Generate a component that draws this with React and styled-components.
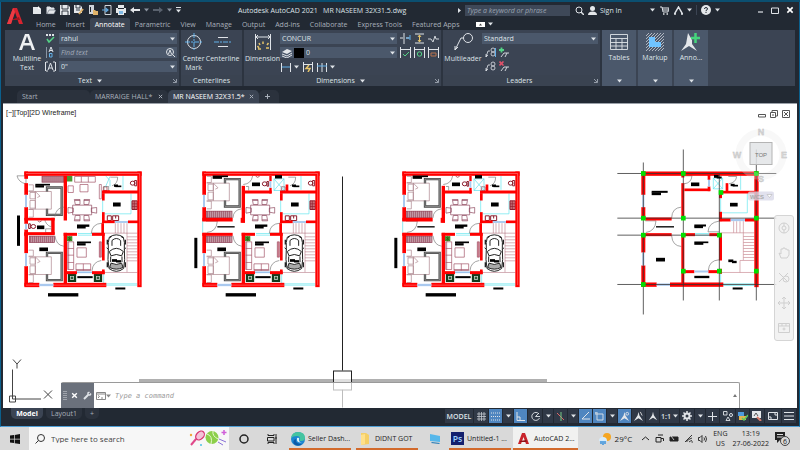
import React, {useState} from 'react';
import styled, {createGlobalStyle} from 'styled-components';

const GlobalStyle = createGlobalStyle`
  * { box-sizing: border-box; }
  body {
    margin: 0;
    font-family: "Open Sans", "Noto Sans", sans-serif;
    font-size: 7px;
    line-height: 9px;
    color: #dfe3e8;
  }
  button, input, select {
    font: inherit;
    color: inherit;
    border: 0;
    padding: 0;
    margin: 0;
    background: none;
  }
  svg { display: block; flex: none; }
`;

const Screen = styled.div`
  display: flex;
  flex-direction: column;
  height: 100vh;
  background: #0b4f70;
`;

const AppWindow = styled.div`
  flex: 1;
  min-height: 0;
  display: flex;
  flex-direction: column;
  margin-top: 2px;
  padding: 0 3px;
  background: #222933;
  border-left: 1px solid #0b5f8c;
  border-right: 1px solid #0b5f8c;
  border-bottom: 1px solid #4f9fd6;
`;

const Header = styled.header`
  display: flex;
  height: 28px;
`;

const LogoButton = styled.button`
  width: 26px;
  padding-left: 3px;
`;

const HeaderRows = styled.div`
  flex: 1;
  min-width: 0;
`;

const TitleRow = styled.div`
  display: flex;
  align-items: center;
  height: 16px;
`;

const QuickAccess = styled.div`
  display: flex;
  align-items: center;
  gap: 4px;
  width: 208px;
  padding-left: 2px;
`;

const ToolButton = styled.button`
  display: flex;
  align-items: center;
  justify-content: center;
  width: ${props => props.$w || 10}px;
  height: ${props => props.$h || 11}px;
`;

const Title = styled.h1`
  flex: 1;
  margin: 0;
  font-size: 7px;
  font-weight: 400;
  white-space: pre;
`;

const SearchBox = styled.input`
  width: 105px;
  height: 11px;
  padding: 0 2px;
  margin: 0 4px;
  background: #3e4858;
  font-style: italic;
  outline: none;
  &::placeholder { color: #9aa3b0; }
`;

const SignIn = styled.button`
  display: flex;
  align-items: center;
  gap: 3px;
  width: 62px;
  margin-left: 4px;
`;

const Group = styled.div`
  display: flex;
  align-items: center;
  gap: ${props => props.$gap}px;
  padding: 0 3px 0 ${props => props.$left || 0}px;
`;

const Divider = styled.span`
  width: 1px;
  height: 10px;
  background: #3b4453;
`;

const Menu = styled.nav`
  display: flex;
  align-items: center;
  height: 12px;
  padding-left: 1px;
`;

const MenuTab = styled.button`
  height: 12px;
  padding: 0 5px;
  border-radius: 2px 2px 0 0;
  white-space: nowrap;
  color: ${props => (props.$active ? '#fff' : '#a9b0ba')};
  background: ${props => (props.$active ? '#3b4453' : 'none')};
`;

const Ribbon = styled.section`
  display: flex;
  height: 56px;
  margin: 0 1px;
  background: #3b4453;
`;

const Panel = styled.div`
  display: flex;
  flex-direction: column;
  width: ${props => props.$w}px;
  border-right: 2px solid #2c3440;
`;

const PanelBody = styled.div`
  flex: 1;
  display: flex;
  padding: 3px 2px 0 ${props => props.$pad || 4}px;
`;

const PanelFoot = styled.div`
  display: flex;
  align-items: center;
  height: 11px;
  padding: 0 2px;
  background: #3a4351;
`;

const PanelName = styled.button`
  flex: 1;
  display: flex;
  align-items: center;
  justify-content: center;
  gap: 5px;
`;

const BigTool = styled.button`
  display: flex;
  flex-direction: column;
  align-items: center;
  width: ${props => props.$w}px;
  gap: 3px;
`;

const Rows = styled.div`
  flex: 1;
  display: flex;
  flex-direction: column;
  gap: 3px;
`;

const Row = styled.div`
  display: flex;
  align-items: center;
  gap: 3px;
  height: 11px;
`;

const FieldBox = styled.label`
  flex: 1;
  display: flex;
  align-items: center;
  gap: 2px;
  min-width: 0;
  height: 11px;
  padding: 0 2px;
  background: #4b586b;
  select, input {
    flex: 1;
    min-width: 0;
    height: 11px;
    appearance: none;
    outline: none;
  }
  input::placeholder { color: #a4adba; font-style: italic; }
`;

const ToolGrid = styled.div`
  display: grid;
  grid-template-columns: repeat(${props => props.$cols}, 11px);
  grid-auto-rows: 11px;
  gap: 3px;
  width: ${props => props.$w}px;
  padding-left: 3px;
`;

const Collapsed = styled.button`
  display: flex;
  flex-direction: column;
  align-items: center;
  gap: 2px;
  width: 34px;
  padding: 3px 0;
  margin-right: 2px;
  background: #4b586b;
  svg:last-child { margin-top: auto; }
`;

const FileTabs = styled.nav`
  display: flex;
  align-items: flex-end;
  height: 17px;
  padding-left: 13px;
`;

const FileTab = styled.div`
  display: flex;
  align-items: center;
  justify-content: space-between;
  width: ${props => props.$w}px;
  height: 13px;
  padding: 0 5px;
  border-radius: 5px 5px 0 0;
  color: ${props => (props.$active ? '#fff' : '#a9b0ba')};
  background: ${props => (props.$active ? '#3b4453' : '#2b323d')};
  button { white-space: nowrap; }
`;

const Canvas = styled.main`
  position: relative;
  flex: 1;
  min-height: 0;
  margin: 0 -1px;
  background: #fff;
  border-top: 1px solid #9aa0a8;
  overflow: hidden;
`;

const Drawing = styled.svg`
  width: 100%;
  height: 100%;
`;

const ViewLabel = styled.div`
  position: absolute;
  top: 4px;
  left: 3px;
  font-family: "Liberation Sans", sans-serif;
  color: #222;
`;

const ViewButtons = styled.div`
  position: absolute;
  top: 4px;
  right: 6px;
  display: flex;
  gap: 2px;
`;

const NavBar = styled.div`
  position: absolute;
  top: 111px;
  right: 3px;
  display: flex;
  flex-direction: column;
  align-items: center;
  justify-content: space-around;
  width: 20px;
  height: 126px;
  border: 1px solid #d5d5d5;
  border-radius: 3px;
  background: rgba(240, 240, 240, 0.85);
`;

const CommandLine = styled.div`
  position: absolute;
  left: 58px;
  right: 57px;
  bottom: 0;
  display: flex;
  align-items: center;
  height: 26px;
  padding-right: 2px;
  border: 1px solid #9a9a9a;
  border-width: 1px 1px 0 0;
  border-radius: 2px 2px 0 0;
  background: rgba(255, 255, 255, 0.7);
  input {
    flex: 1;
    height: 20px;
    padding-left: 4px;
    font: italic 7px "DejaVu Sans Mono", monospace;
    outline: none;
    color: #333;
  }
  input::placeholder { color: #999; opacity: 1; }
`;

const CommandGrip = styled.div`
  display: flex;
  align-items: center;
  justify-content: space-around;
  width: 33px;
  height: 25px;
  margin-right: 2px;
  background: #6b717c;
`;

const StatusBar = styled.footer`
  display: flex;
  align-items: flex-start;
  justify-content: space-between;
  height: 18px;
  padding-left: 7px;
`;

const LayoutTabs = styled.div`
  display: flex;
  gap: 3px;
`;

const LayoutTab = styled.button`
  height: 11px;
  min-width: ${props => props.$w}px;
  padding: 0 5px;
  border-radius: 0 0 5px 5px;
  font-weight: ${props => (props.$active ? 700 : 400)};
  color: ${props => (props.$active ? '#fff' : '#a9b0ba')};
  background: ${props => (props.$active ? '#3b4453' : '#2b323d')};
`;

const StatusTools = styled.div`
  display: flex;
  gap: 1px;
  padding-top: 1px;
`;

const StatusTool = styled.button`
  display: flex;
  align-items: center;
  justify-content: center;
  gap: 2px;
  width: ${props => props.$w || 13}px;
  height: 14px;
  font-weight: 600;
  background: ${props => (props.$on ? '#4f86c0' : '#303947')};
`;

const Taskbar = styled.footer`
  display: flex;
  align-items: stretch;
  height: 23px;
  color: #222;
  background: #d9d9d9;
`;

const TaskButton = styled.button`
  display: flex;
  align-items: center;
  justify-content: ${props => (props.$open ? 'flex-start' : 'center')};
  gap: 3px;
  width: ${props => props.$w}px;
  padding: ${props => (props.$open ? '2px 2px 0' : '0')};
  margin-right: ${props => props.$mr || 0}px;
  white-space: nowrap;
  background: ${props => (props.$front ? '#f1f1f0' : 'none')};
  border-bottom: ${props => (props.$open ? '2px solid #d26a2c' : '0')};
`;

const TaskSearch = styled.label`
  display: flex;
  align-items: center;
  gap: 6px;
  width: 200px;
  padding: 0 2px 0 6px;
  background: #f7f7f7;
  input {
    flex: 1;
    min-width: 0;
    font-size: 8px;
    outline: none;
  }
  input::placeholder { color: #444; opacity: 1; }
`;

const Tray = styled.div`
  flex: 1;
  display: flex;
  align-items: center;
  justify-content: flex-end;
  gap: 5px;
  padding-right: 10px;
`;

const Weather = styled.button`
  display: flex;
  align-items: center;
  gap: 4px;
  font-size: 8px;
  margin-right: 4px;
`;

const TrayText = styled.div`
  text-align: center;
  line-height: 10px;
`;

const Icon = ({w = 10, h, box, children, color = '#dfe3e8', fill = 'none', sw = 1}) => (
  <svg width={w} height={h || w} viewBox={box || `0 0 ${w} ${h || w}`} fill={fill}
    stroke={color} strokeWidth={sw} aria-hidden="true">
    {children}
  </svg>
);

const Caret = ({color = '#dfe3e8'}) => (
  <svg width="5" height="4" viewBox="0 0 5 4" aria-hidden="true">
    <path d="M0 0.5H5L2.5 3.5Z" fill={color}/>
  </svg>
);

const Corner = () => (
  <Icon w={4} sw={0.8} color="#aab2be"><path d="M0 0L3 3M3.5 0V3.5H0"/></Icon>
);

const Cross = ({color = '#a9b0ba', w = 5}) => (
  <Icon w={w} box="0 0 6 6" color={color} sw={1.2}><path d="M1 1L5 5M5 1L1 5"/></Icon>
);

const quickTools = [
  ['New', <Icon color="none"><path d="M1 2H6L9 4V9H1Z" fill="#e4e7ea"/><path d="M6 1L9 4H6Z" fill="#fff"/></Icon>],
  ['Open', <Icon><path d="M1 9V2H4L5 3H8V5" fill="#e4e7ea"/><path d="M1 9L3 5H10L8 9Z" fill="#e4e7ea" stroke="#4a5361" strokeWidth="0.5"/></Icon>],
  ['Save', <Icon><path d="M0 0H8L10 2V10H0Z" fill="#e4e7ea" stroke="none"/><path d="M2 0V4H8V0M2 10V6H8V10" stroke="#222933" strokeWidth="0.9"/></Icon>],
  ['Save As', <Icon><path d="M0 0H6L8 2V8H0Z" fill="#e4e7ea" stroke="none"/><path d="M2 0V3H6V0M2 5H6" stroke="#222933" strokeWidth="0.9"/><path d="M5 9L9 4" stroke="#e0b36a" strokeWidth="2"/></Icon>],
  ['Open from Web', <Icon><path d="M1 0H6V9H1Z" fill="#cfd4da" stroke="none"/><path d="M5 5H7L8 6H10V10H5Z" fill="#e0b36a" stroke="none"/><path d="M2.5 2V7" stroke="#222933"/></Icon>],
  ['Save to Web', <Icon><path d="M3 0.5H9V9.5H3Z" stroke="#cfd4da"/><path d="M0 5H5M3.5 3L6 5L3.5 7" stroke="#5fa8e0" strokeWidth="1.2"/></Icon>],
  ['Plot', <Icon><path d="M2 0H8V3H10V8H8V10H2V8H0V3H2Z" fill="#e4e7ea" stroke="none"/><path d="M2 3.5H8" stroke="#222933"/><path d="M3 6H7V9H3Z" fill="#7fb9e6" stroke="none"/></Icon>],
  ['Undo', <Icon><path d="M0 5L4 2V4H10V6H4V8Z" fill="#e4e7ea" stroke="none"/></Icon>],
];

const menuTabs = ['Home', 'Insert', 'Annotate', 'Parametric', 'View', 'Manage', 'Output',
  'Add-ins', 'Collaborate', 'Express Tools', 'Featured Apps'];

const dimensionTools = [
  ['Break', <Icon w={11}><path d="M4 0V11M0 5H3M6 5H9"/><path d="M6 5H10M10 2V7" stroke="#63b0ea"/></Icon>],
  ['Adjust Space', <Icon w={11}><path d="M1 1H10M1 10H10"/><path d="M5.5 2V9M4 4L5.5 2L7 4M4 7L5.5 9L7 7" stroke="#e6c46a"/></Icon>],
  ['Jogged', <Icon w={11}><path d="M0 6H3L5 9L7 3L8 6H11" strokeWidth="0.9"/></Icon>],
  ['Inspect', <Icon w={11}><path d="M0.5 0V11M10.5 0V11M1 2.5H10"/><path d="M3 7L5 9L9 5" stroke="#54d487"/></Icon>],
  ['Update', <Icon w={11}><path d="M0.5 0V11M10.5 0V11M1 2.5H10"/><circle cx="5.5" cy="7" r="2.2" stroke="#54d487"/></Icon>],
  ['Reassociate', <Icon w={11}><path d="M0.5 0V11M10.5 0V11M1 2.5H10"/><path d="M3 6H8V9H3Z" stroke="#b9734f"/></Icon>],
];

const leaderShape = <path d="M1 10L3 4H5M1 10V7M1 10L3 8M8 5A2 2 0 1 0 8 1A2 2 0 1 0 8 5A2 2 0 1 0 8 9A2 2 0 1 0 8 5" strokeWidth="0.8"/>;
const leaderTools = [
  ['Align', <Icon w={11}>{leaderShape}<path d="M10.5 1V10" stroke="#63b0ea"/></Icon>],
  ['Add Leader', <Icon w={11}><path d="M0 3H5M2.5 0.5V5.5" stroke="#54d487" strokeWidth="1.8"/><path d="M2 10L5 6H10M6 10L8 6" strokeWidth="0.9"/></Icon>],
  ['Collect', <Icon w={11}>{leaderShape}</Icon>],
  ['Remove Leader', <Icon w={11}><path d="M0.5 0.5L4.5 4.5M4.5 0.5L0.5 4.5" stroke="#e0526a" strokeWidth="1.6"/><path d="M2 10L5 6H10M6 10L8 6" strokeWidth="0.9"/></Icon>],
];

const personShape = <path d="M6 1L7 5L11 11L6 8L1 11L5 5Z" fill="#e4e7ea" stroke="none"/>;

// x, y, w, h of solid blocks, three drawing units to the pixel
const Blocks = ({list, fill}) => (
  <g fill={fill} stroke="none">
    {list.map(([x, y, w, h], i) => <rect key={i} x={x} y={y} width={w} height={h}/>)}
  </g>
);

const Hatch = ({x, y, w, h}) => (
  <g stroke="#8a3a50" strokeWidth="2">
    <rect x={x} y={y} width={w} height={h} fill="#c9a3ad"/>
    {Array.from({length: Math.floor(w / 6)}, (_, i) => (
      <path key={i} d={`M${x + 3 + i * 6} ${y}v${h}`}/>
    ))}
  </g>
);

const Bed = ({y}) => (
  <g transform={`translate(0 ${y})`} fill="none" stroke="#a98089" strokeWidth="2">
    <path d="M50 0H64V18H50M50 74H64V97H50M50 20H118V73H50M70 20V73"/>
    <path d="M54 23H70V42H54ZM54 47H70V70H54ZM70 20L84 34L76 38"/>
    <path d="M105 20V8H149V90H105V72" stroke="#4a4a4a" strokeWidth="7"/>
    <path d="M105 20V8H149V90H105V72" stroke="#a5a5a5" strokeWidth="2"/>
  </g>
);

const Car = () => (
  <g fill="none" stroke="#222" strokeWidth="3">
    <path d="M292 230Q313 216 334 230Q339 245 337 265Q340 300 335 324Q313 341 291 324Q286 300 289 265Q287 245 292 230Z"/>
    <path d="M293 232L299 228M333 232L327 228M292 273Q313 254 334 273L329 286Q313 278 297 286Z"/>
    <path d="M297 308Q313 316 329 308L333 321Q313 331 293 321Z" fill="#aaa"/>
    <path d="M296 288V305M330 288V305M300 240Q313 228 326 240V256M300 240V256M284 262L290 267M342 262L336 267"/>
    <path d="M286 238V252M340 238V252M286 305V320M340 305V320" strokeWidth="4"/>
  </g>
);

const Dining = () => (
  <g fill="none" stroke="#8a4056" strokeWidth="2">
    <path d="M182 134H239V163H182Z"/>
    <path d="M187 117H204V132H190ZM216 117H233L230 132H216ZM190 165H204V181H187ZM216 165H230L233 181H216ZM168 141L184 143V155L168 158ZM254 141L238 143V155L254 158Z"/>
    <path d="M189 120H204M216 120H231M189 178H204M216 178H231"/>
  </g>
);

const EastSide = () => (
  <g>
    <g fill="none" stroke="#a8606f" strokeWidth="1.5">
      <path d="M310 188V218M318 188V218M327 188V218M336 188V218M345 188V335M278 218H376M275 336H376"/>
      <path d="M345 229H376M345 238H376M345 247H376M345 256H376M345 265H376M345 274H376M345 283H376M345 292H376M345 301H376"/>
    </g>
    <g fill="none" stroke="#5fe6ee" strokeWidth="2">
      <path d="M333 46V88M357 99V160H278M272 118V158M275 335V370H376M275 374H376M198 219H240M198 224H240"/>
    </g>
    <g fill="none" stroke="#777" strokeWidth="2">
      <path d="M295 50H317Q317 70 300 76M270 188Q240 190 238 218H270M268 300Q242 304 240 331"/>
    </g>
    <g fill="none" stroke="#8c1c2c" strokeWidth="3">
      <path d="M374 60H368V76H374Z"/>
      <ellipse cx="362" cy="68" rx="7" ry="6"/>
      <path d="M274 79H285V90H274Z" strokeWidth="2"/>
      <path d="M286 166H298V180H286ZM302 166H320V180H302ZM311 166V174"/>
      <path d="M360 121H376V147H360Z" fill="#c87078"/>
      <path d="M360 130H376M360 138H376M367 121V147" strokeWidth="2"/>
    </g>
    <Dining/>
    <g fill="none" stroke="#a04e62" strokeWidth="2">
      <path d="M167 244H185V327H167ZM167 264H185M167 284H185M167 306H185M170 244V327"/>
      <path d="M192 310H236V330H192ZM214 310V330M192 327H236M195 262H223V290H195Z"/>
      <path d="M262 244H268V290H262Z" fill="#d08090"/>
    </g>
    <Blocks fill="#4a9632" list={[[165, 227, 16, 15]]}/>
    <path d="M167 229L179 240M179 229L167 240M173 227V242" stroke="#235c14" strokeWidth="2"/>
    <Car/>
    <Blocks fill="#9cc3ec" list={[[308, 182, 40, 5], [195, 333, 45, 5]]}/>
    <g fill="#fff" stroke="#123c1c" strokeWidth="7">
      <path d="M171 343H189V361H171ZM249 343H267V361H249Z"/>
    </g>
    <Blocks fill="#2f5a3a" list={[[176, 348, 8, 8], [254, 348, 8, 8]]}/>
  </g>
);

const commonWalls = [
  [37, 33, 352, 13], [376, 33, 13, 347], [37, 367, 45, 13], [124, 367, 159, 13],
  [37, 217, 11, 61], [37, 317, 11, 60], [155, 217, 10, 153], [268, 188, 8, 30],
  [270, 98, 8, 22], [270, 155, 8, 32], [270, 180, 38, 8], [348, 180, 30, 8],
  [270, 90, 108, 9], [155, 217, 40, 9], [240, 217, 38, 9], [270, 217, 8, 83],
  [270, 327, 8, 14], [165, 332, 30, 9], [240, 332, 38, 9],
];

const commonNotes = [
  [306, 72, 12, 7], [310, 75, 18, 5], [303, 126, 23, 12], [195, 192, 37, 7], [195, 196, 26, 8],
  [195, 243, 42, 5], [195, 248, 26, 7], [82, 261, 26, 11], [300, 296, 15, 8], [312, 299, 15, 7],
  [196, 347, 46, 6], [310, 381, 30, 6],
];

const WallLines = () => (
  <path d="M383 39V374M42 39H383M42 374H82M124 374H283" fill="none" stroke="#ff9a9a" strokeWidth="1.5"/>
);

const PlanB = ({x}) => (
  <g transform={`translate(${x} 160) scale(0.3333)`}>
    <EastSide/>
    <Bed y={48}/>
    <Bed y={269}/>
    <Hatch x={50} y={152} w={76} h={20}/>
    <Hatch x={50} y={227} w={76} h={19}/>
    <g fill="none" stroke="#777" strokeWidth="2">
      <path d="M48 182H82Q80 214 50 216M129 172Q130 148 155 145M155 257Q132 254 129 226M160 72Q184 70 188 46M168 78H176V90"/>
    </g>
    <path d="M252 55H282V90H252ZM252 55L282 90M282 55L252 90M38 180V217M257 46V52" fill="none" stroke="#5cdde8" strokeWidth="2"/>
    <g fill="none" stroke="#8c1c2c" strokeWidth="3">
      <path d="M236 63H231V77H236Z"/><ellipse cx="224" cy="70" rx="7" ry="6"/>
      <path d="M197 47Q203 54 209 47" strokeWidth="2"/>
    </g>
    <Blocks fill="#ff0000" list={[...commonWalls, [37, 33, 11, 70], [37, 140, 11, 41], [37, 172, 91, 11],
      [152, 172, 13, 15], [155, 76, 10, 110], [37, 217, 91, 9], [163, 90, 82, 9], [238, 46, 7, 16],
      [238, 82, 7, 17], [287, 72, 8, 20]]}/>
    <WallLines/>
    <Blocks fill="#a9c9ef" list={[[39, 103, 6, 37], [39, 278, 6, 39], [82, 370, 42, 7], [239, 62, 5, 20]]}/>
    <Blocks fill="#000" list={[...commonNotes, [68, 45, 46, 5], [68, 49, 28, 6], [186, 66, 24, 11],
      [255, 44, 21, 10], [82, 197, 52, 4], [13, 232, 9, 91], [107, 398, 91, 10]]}/>
  </g>
);

const PlanA = () => (
  <g transform="translate(12 160) scale(0.3333)">
    <EastSide/>
    <Bed y={73}/>
    <Bed y={269}/>
    <Hatch x={90} y={47} w={66} h={18}/>
    <Hatch x={52} y={227} w={76} h={19}/>
    <g fill="none" stroke="#777" strokeWidth="2">
      <path d="M15 46H42V70Q20 66 15 46M155 140Q132 142 129 168M155 257Q132 254 129 226M98 175Q100 192 118 200V178"/>
      <path d="M101 205H119V217H101ZM276 78H290V92H276Z"/>
    </g>
    <g fill="none" stroke="#a04e62" strokeWidth="2">
      <path d="M188 48H250V65H188ZM208 48V65M229 48V65M168 76H184V96H168ZM204 72H228V94H204ZM262 72H268V115H262Z"/>
    </g>
    <Blocks fill="#4a9632" list={[[165, 46, 16, 17]]}/>
    <path d="M281 46L294 60V78M281 78L294 48" fill="none" stroke="#5cdde8" strokeWidth="2"/>
    <g fill="none" stroke="#8c1c2c" strokeWidth="3">
      <path d="M50 190H55V204H50Z"/><ellipse cx="64" cy="198" rx="7" ry="6"/>
      <path d="M77 181Q83 188 89 181" strokeWidth="2"/>
    </g>
    <Blocks fill="#ff0000" list={[...commonWalls, [37, 33, 11, 22], [37, 68, 11, 35], [37, 140, 11, 50],
      [37, 207, 11, 20], [37, 172, 91, 8], [118, 172, 10, 50], [155, 46, 10, 134], [37, 215, 91, 9],
      [272, 90, 22, 4]]}/>
    <WallLines/>
    <Blocks fill="#a9c9ef" list={[[39, 103, 6, 37], [39, 190, 6, 17], [39, 278, 6, 39], [82, 370, 42, 7]]}/>
    <Blocks fill="#000" list={[...commonNotes, [70, 70, 44, 5], [70, 74, 26, 7], [75, 195, 22, 11],
      [15, 165, 9, 91], [108, 398, 91, 10]]}/>
  </g>
);

const nodes = [[100, 219], [220, 219], [439, 219], [333, 276], [220, 353], [439, 353], [100, 353],
  [100, 404], [220, 404], [328, 404], [220, 512], [328, 512], [439, 512], [100, 552]];

const ColumnPlan = () => (
  <g transform="translate(610 100) scale(0.3333)">
    <g fill="none" stroke="#c98a92" strokeWidth="2">
      <path d="M371 362V397M380 362V397M390 362V397M400 362V480M332 397H433M332 516H433M390 516V480H400"/>
      <path d="M400 408H433M400 417H433M400 426H433M400 435H433M400 444H433M400 453H433M400 462H433M400 471H433M400 480H433"/>
    </g>
    <g fill="none" stroke="#5fe6ee" strokeWidth="2">
      <path d="M310 233H338V265H310ZM310 233L338 265M338 233L310 265M392 225V268M412 279V337H332V292M332 516V550H433M255 399H298M255 404H298M340 555H433"/>
    </g>
    <g fill="none" stroke="#777" strokeWidth="2">
      <path d="M222 226H246Q244 248 222 250M355 228H380Q378 246 357 250M214 320Q186 322 185 352M106 361H138Q136 392 108 396M214 438Q187 436 185 406M327 362Q296 366 294 394H327M327 478Q297 480 295 510"/>
    </g>
    <Blocks fill="#ff0000" list={[
      [95, 213, 345, 13], [94, 213, 12, 70], [94, 320, 12, 35], [94, 402, 12, 54], [94, 495, 12, 64],
      [433, 213, 13, 347], [95, 546, 45, 13], [180, 546, 160, 13], [214, 213, 9, 18], [214, 248, 9, 106],
      [214, 402, 9, 148], [106, 351, 79, 9], [95, 398, 90, 9], [220, 398, 35, 9], [298, 398, 34, 9],
      [223, 264, 78, 8], [293, 223, 8, 15], [293, 258, 8, 14], [347, 248, 8, 28], [335, 271, 105, 8],
      [327, 271, 9, 22], [327, 334, 9, 28], [327, 398, 9, 82], [327, 505, 9, 15], [328, 354, 34, 9],
      [405, 354, 30, 9], [218, 509, 35, 9], [295, 509, 34, 9],
    ]}/>
    <Blocks fill="#a9c9ef" list={[[97, 283, 6, 37], [97, 456, 6, 39], [140, 549, 40, 7], [294, 238, 6, 20],
      [362, 355, 43, 7], [253, 510, 42, 6]]}/>
    <path d="M100 186V642M220 147V600M328 404V600M439 147V600M328 219V404M22 219H499M22 353H499M22 404H330M22 552H499"
      stroke="#333" strokeOpacity="0.9" strokeWidth="2.6"/>
    <g fill="#00e000">
      {nodes.map(([x, y]) => <rect key={`${x}-${y}`} x={x - 7} y={y - 7} width="14" height="14"/>)}
    </g>
    <Blocks fill="#000" list={[[125, 271, 48, 6], [125, 276, 28, 8], [243, 246, 25, 11], [312, 223, 14, 9],
      [320, 228, 15, 6], [362, 250, 12, 7], [368, 253, 16, 5], [360, 307, 23, 11], [253, 372, 35, 6],
      [253, 376, 26, 7], [253, 423, 42, 5], [253, 427, 27, 6], [138, 377, 54, 4], [138, 472, 27, 11],
      [355, 477, 15, 8], [366, 481, 14, 7], [253, 526, 45, 7], [368, 561, 30, 6]]}/>
  </g>
);

const ViewCube = () => (
  <g fontFamily="Liberation Sans, sans-serif" fontWeight="700" textAnchor="middle">
    <circle cx="761" cy="154" r="22" fill="none" stroke="#e8e8e8" strokeOpacity="0.3" strokeWidth="7"/>
    <rect x="750" y="142" width="22" height="22" fill="#e2e4e6" fillOpacity="0.85" stroke="#b4b4b4"/>
    <g fontSize="9" fill="#dadada" stroke="#b8b8b8" strokeWidth="0.3">
      <text x="761" y="134">N</text>
      <text x="737" y="157">W</text>
      <text x="784" y="157">E</text>
      <text x="761" y="181">S</text>
    </g>
    <text x="761" y="156" fontSize="6" fontWeight="400" fill="#777">TOP</text>
    <rect x="748" y="191" width="26" height="9" rx="2" fill="#d9d9e8" fillOpacity="0.8"/>
    <text x="757" y="198" fontSize="6" fill="#aaa">WCS</text>
    <path d="M767 194H772L769.5 197Z" fill="#fff" stroke="#aaa" strokeWidth="0.5"/>
  </g>
);

const Crosshair = () => (
  <g fill="none" stroke="#222">
    <path d="M139 380H547" stroke="#b0b0b0" strokeWidth="3"/>
    <path d="M342.5 176V370M342.5 389V407"/>
    <rect x="333.5" y="370.5" width="18" height="19" fill="#fff" fillOpacity="0.6"/>
  </g>
);

const UcsMark = () => (
  <g fill="none" stroke="#444">
    <path d="M12.5 369V398.5H41M9.5 395.5H15.5V401.5H9.5Z"/>
    <path d="M13 359L17 363.5L21 359M17 363.5V368M44 390L52 398M52 390L44 398"/>
  </g>
);

const Field = ({label, options}) => (
  <FieldBox>
    <select aria-label={label}>
      {options.map(option => <option key={option}>{option}</option>)}
    </select>
    <Caret/>
  </FieldBox>
);

const navTools = [
  ['Full navigation wheel', <Icon w={12} color="#cfcfcf"><circle cx="6" cy="6" r="5"/><circle cx="6" cy="6" r="2"/><path d="M6 1V4M6 8V11"/></Icon>],
  ['Pan', <Icon w={12} color="#cfcfcf"><path d="M3 11L1 6L3 7V2H5V1H7V2H9V3H11V8L9 11Z"/></Icon>],
  ['Zoom', <Icon w={12} color="#cfcfcf"><path d="M1 1L10 10M10 1L1 10"/><circle cx="8" cy="7" r="3"/></Icon>],
  ['Orbit', <Icon w={12} color="#cfcfcf"><path d="M6 0V12M0 6H12M4 2L6 0L8 2M4 10L6 12L8 10M2 4L0 6L2 8M10 4L12 6L10 8"/></Icon>],
  ['ShowMotion', <Icon w={12} color="#cfcfcf"><path d="M0.5 1.5H11.5V10.5H0.5ZM0.5 4H11.5M4 1V4M8 1V4"/><circle cx="6" cy="7" r="1"/></Icon>],
];

const App = () => {
  const [tab, setTab] = useState('Annotate');
  const [file, setFile] = useState('MR NASEEM 32X31.5*');
  const [layout, setLayout] = useState('Model');

  return (
    <Screen>
      <GlobalStyle/>
      <AppWindow>
        <Header>
          <LogoButton aria-label="Application menu">
            <Icon w={16} h={20} color="none">
              <path d="M0 18L6 2H10L16 18H12L8 6L4 18Z" fill="#d8242f"/>
              <path d="M4 14L12 11L13 14Z" fill="#a3141f"/>
              <path d="M6 2L8 6L4 18H0Z" fill="#ec3b43"/>
            </Icon>
          </LogoButton>
          <HeaderRows>
            <TitleRow>
              <QuickAccess>
                {quickTools.map(([name, icon]) => <ToolButton key={name} aria-label={name}>{icon}</ToolButton>)}
                <ToolButton $w={5} aria-label="Undo list"><Caret color="#8a929e"/></ToolButton>
                <ToolButton aria-label="Redo">
                  <Icon><path d="M10 5L6 2V4H0V6H6V8Z" fill="#59616d" stroke="none"/></Icon>
                </ToolButton>
                <ToolButton $w={5} aria-label="Redo list"><Caret color="#8a929e"/></ToolButton>
                <ToolButton $w={5} aria-label="Customize">
                  <Icon w={5} h={6}><path d="M0 0.5H5"/><path d="M0 2.5H5L2.5 5.5Z" fill="#dfe3e8" stroke="none"/></Icon>
                </ToolButton>
              </QuickAccess>
              <Title>{'Autodesk AutoCAD 2021   MR NASEEM 32X31.5.dwg'}</Title>
              <Icon w={4} h={5} color="none"><path d="M1 0L4 2.5L1 5Z" fill="#dfe3e8"/></Icon>
              <SearchBox aria-label="Search" placeholder="Type a keyword or phrase"/>
              <ToolButton aria-label="Find">
                <Icon w={9}><circle cx="4" cy="4" r="3"/><path d="M6 6L9 9" strokeWidth="1.5"/></Icon>
              </ToolButton>
              <SignIn>
                <Icon w={9} color="none"><circle cx="4.5" cy="2.5" r="2.5" fill="#e4e7ea"/><path d="M0 9Q0 5.5 4.5 5.5Q9 5.5 9 9Z" fill="#e4e7ea"/></Icon>
                Sign In
              </SignIn>
              <Group $gap={4}>
                <Caret/>
                <ToolButton aria-label="Cart">
                  <Icon w={9}><path d="M0 1H2L3 6H8L9 2H2M3 4H8"/><path d="M3 8H4.5M6.5 8H8" strokeWidth="1.5"/></Icon>
                </ToolButton>
                <ToolButton aria-label="Autodesk App Store">
                  <Icon w={9}><path d="M0.5 8L4.5 1L8.5 8M2 8H0M7 8H9" strokeWidth="1.5"/></Icon>
                </ToolButton>
                <Caret/>
                <Divider/>
                <ToolButton aria-label="Help">
                  <svg width="10" height="10" viewBox="0 0 10 10">
                    <circle cx="5" cy="5" r="5" fill="#e4e7ea"/>
                    <path d="M3.5 4Q3.5 2.5 5 2.5Q6.5 2.5 6.5 4Q6.5 4.8 5 5.5V6.2M5 7V8" fill="none" stroke="#222933"/>
                  </svg>
                </ToolButton>
                <Caret/>
              </Group>
              <Group $gap={7} $left={35}>
                <ToolButton $w={6} aria-label="Minimize"><Icon w={6}><path d="M0 5H5" strokeWidth="1.2"/></Icon></ToolButton>
                <ToolButton $w={8} aria-label="Maximize"><Icon w={8} h={7}><path d="M0.5 1H7.5V6.5H0.5Z"/></Icon></ToolButton>
                <ToolButton $w={7} aria-label="Close"><Cross w={8} color="#fff"/></ToolButton>
              </Group>
            </TitleRow>
            <Menu>
              {menuTabs.map(name => (
                <MenuTab key={name} $active={name === tab} onClick={() => setTab(name)}>{name}</MenuTab>
              ))}
              <Group $gap={3} $left={11}>
                <Icon w={9} h={5} color="none"><path d="M0 0H9V5H0Z" fill="#fff"/><path d="M3 3.5L4.5 1.5L6 3.5Z" fill="#444"/></Icon>
                <Caret/>
              </Group>
            </Menu>
          </HeaderRows>
        </Header>

        <Ribbon>
          <Panel $w={176}>
            <PanelBody>
              <BigTool $w={36}>
                <Icon w={16} h={18} color="none"><path d="M0 17L6 1H10L16 17H13L11.5 12.5H4.5L3 17ZM5.5 10H10.5L8 3Z" fill="#eef0f2"/></Icon>
                <span>Multiline<br/>Text</span>
              </BigTool>
              <Rows>
                <Row>
                  <Icon w={11}><path d="M1 2H9" strokeWidth="2" strokeDasharray="2 1"/><path d="M2 6L4 9L9 4" stroke="#54d487" strokeWidth="1.5"/></Icon>
                  <Field label="Text style" options={['rahul']}/>
                </Row>
                <Row>
                  <Icon w={11}><path d="M1.5 0V11" stroke="#8a95a4"/><path d="M4 5L6 0L8 5M5 3.5H7"/><path d="M4.5 6.5H7V10H4.5Z" stroke="#63b0ea"/></Icon>
                  <FieldBox>
                    <input aria-label="Find text" placeholder="Find text"/>
                    <Icon w={9}><circle cx="4" cy="4" r="3.5"/><path d="M2.5 6L4 2L5.5 6M6.5 6.5L9 9"/></Icon>
                  </FieldBox>
                </Row>
                <Row>
                  <Icon w={11}><path d="M0.5 1V10M10.5 1V10M1 1H3M8 1H10M1 10H3M8 10H10M3 9L5.5 2L8 9M4 7H7"/></Icon>
                  <Field label="Text height" options={['0"']}/>
                </Row>
              </Rows>
            </PanelBody>
            <PanelFoot><PanelName>Text <Caret/></PanelName><Corner/></PanelFoot>
          </Panel>

          <Panel $w={63}>
            <PanelBody $pad={1}>
              <BigTool $w={24}>
                <Icon w={18}><circle cx="9" cy="9" r="6.5"/><path d="M9 0V18M0 9H18" stroke="#63b0ea" strokeDasharray="5 1 2 1"/></Icon>
                <span>Center<br/>Mark</span>
              </BigTool>
              <BigTool $w={36}>
                <Icon w={18}><path d="M4 4.5H14M4 13.5H14"/><path d="M0 9H18" stroke="#63b0ea" strokeDasharray="5 1 2 1"/></Icon>
                Centerline
              </BigTool>
            </PanelBody>
            <PanelFoot><PanelName>Centerlines</PanelName></PanelFoot>
          </Panel>

          <Panel $w={199}>
            <PanelBody $pad={1}>
              <BigTool $w={35}>
                <Icon w={18}><path d="M1.5 1V17M16.5 1V17M2 4H16M4 2L2 4L4 6M14 2L16 4L14 6"/><path d="M5 15L3.5 13M9 11V8.5M13 12L14.5 10M6 12L5 10M12 15H15M4 16H7" stroke="#e6c46a" strokeWidth="1.5"/></Icon>
                Dimension
              </BigTool>
              <Rows>
                <Row><Field label="Dimension style" options={['CONCUR']}/></Row>
                <Row>
                  <FieldBox>
                    <Icon w={10}><path d="M0 4L5 1L10 3L5 6Z" fill="#e4e7ea" stroke="none"/><path d="M0 6L5 8L10 5M0 8L5 10L10 7"/></Icon>
                    <Icon w={10} color="none"><path d="M0 0H10V10H0Z" fill="#000"/></Icon>
                    <select aria-label="Dimension layer"><option>0</option></select>
                    <Caret/>
                  </FieldBox>
                </Row>
                <Row>
                  <ToolButton $w={11} aria-label="Linear"><Icon><path d="M0.5 1V10M9.5 1V10"/><path d="M1 5H9" stroke="#63b0ea"/></Icon></ToolButton>
                  <Caret/>
                  <ToolButton $w={11} aria-label="Quick dimension"><Icon><path d="M0.5 0V10M9.5 0V10M1 2.5H9"/><path d="M6 3L3 6.5H7L5 10" stroke="#e6c46a" strokeWidth="1.5"/></Icon></ToolButton>
                  <ToolButton $w={11} aria-label="Continue"><Icon><path d="M0.5 1V10M5 1V10M9.5 1V10"/><path d="M0 4H10" stroke="#63b0ea"/></Icon></ToolButton>
                  <Caret/>
                </Row>
              </Rows>
              <ToolGrid $cols={3} $w={42}>
                {dimensionTools.map(([name, icon]) => <ToolButton key={name} $w={11} aria-label={name}>{icon}</ToolButton>)}
              </ToolGrid>
            </PanelBody>
            <PanelFoot><PanelName>Dimensions <Caret/></PanelName><Corner/></PanelFoot>
          </Panel>

          <Panel $w={159}>
            <PanelBody $pad={1}>
              <BigTool $w={38}>
                <Icon w={19} h={18}><circle cx="14" cy="5" r="4.5"/><path d="M9.5 5H7L1 17M1 17V13M1 17L4 14"/></Icon>
                Multileader
              </BigTool>
              <Rows>
                <Row><Field label="Multileader style" options={['Standard']}/></Row>
                <ToolGrid $cols={2}>
                  {leaderTools.map(([name, icon]) => <ToolButton key={name} $w={11} aria-label={name}>{icon}</ToolButton>)}
                </ToolGrid>
              </Rows>
            </PanelBody>
            <PanelFoot><PanelName>Leaders</PanelName><Corner/></PanelFoot>
          </Panel>

          <Collapsed>
            <Icon w={18}><path d="M0.5 1.5H17.5V16.5H0.5ZM0.5 5.5H17.5M0.5 9.5H17.5M0.5 13H17.5M6 5.5V16.5M12 5.5V16.5" strokeWidth="0.9"/></Icon>
            Tables
            <Caret/>
          </Collapsed>
          <Collapsed>
            <Icon w={18}>
              <path d="M0 3L3 0M0 6L6 0M0 9L9 0M0 12L12 0M0 15L15 0M0 18L18 0M3 18L18 3M6 18L18 6M9 18L18 9M12 18L18 12M15 18L18 15" strokeWidth="0.7"/>
              <path d="M3 4H9V9H15V14H3Z" fill="#6fc3ff" stroke="none"/>
            </Icon>
            Markup
            <Caret/>
          </Collapsed>
          <Collapsed>
            <Icon w={20} h={18} color="none">
              <path d="M7 0L11 7V11L16 18L8 13L0 18L5 11Z" fill="#e4e7ea"/>
              <path d="M10 5H19M14.5 0V10" stroke="#45d67c" strokeWidth="2.5"/>
            </Icon>
            Anno...
            <Caret/>
          </Collapsed>
        </Ribbon>

        <FileTabs>
          <FileTab $w={73}><button onClick={() => setFile('Start')}>Start</button></FileTab>
          {[['MARRAIGE HALL*', 78], ['MR NASEEM 32X31.5*', 91]].map(([name, w]) => (
            <FileTab key={name} $w={w} $active={name === file}>
              <button onClick={() => setFile(name)}>{name}</button>
              <button aria-label={`Close ${name}`}><Cross/></button>
            </FileTab>
          ))}
          <FileTab $w={20}>
            <button aria-label="New tab"><Icon w={7} color="#a9b0ba"><path d="M3.5 1V6M1 3.5H6"/></Icon></button>
          </FileTab>
        </FileTabs>

        <Canvas>
          <Drawing viewBox="3 104 794 303" role="img" aria-label="Floor plans">
            <PlanA/>
            <PlanB x={190}/>
            <PlanB x={390}/>
            <ColumnPlan/>
            <UcsMark/>
            <Crosshair/>
            <ViewCube/>
          </Drawing>
          <ViewLabel>[−][Top][2D Wireframe]</ViewLabel>
          <ViewButtons>
            <ToolButton aria-label="Minimize view"><Icon w={8} color="#555"><path d="M0.5 4.5H7.5V7H0.5Z"/></Icon></ToolButton>
            <ToolButton aria-label="Restore view"><Icon w={8} color="#555"><path d="M0.5 2.5H5.5V7.5H0.5ZM2 2V0.5H7.5V6H6M2 5H4"/></Icon></ToolButton>
            <ToolButton aria-label="Close view"><Icon w={8} color="#555"><path d="M0.5 0.5H7.5V7.5H0.5ZM2 2L6 6M6 2L2 6"/></Icon></ToolButton>
          </ViewButtons>
          <NavBar>
            {navTools.map(([name, icon]) => <ToolButton key={name} $w={14} $h={14} aria-label={name}>{icon}</ToolButton>)}
          </NavBar>
          <CommandLine>
            <CommandGrip>
              <Icon w={4} h={10} color="#d5d8dc"><path d="M1 0V10M3 0V10" strokeDasharray="1 1"/></Icon>
              <Cross color="#fff" w={7}/>
              <Icon w={9}><path d="M1 8L5 4" strokeWidth="2"/><path d="M8 2.5L7 4H5V2L6.5 1" strokeWidth="1.5"/></Icon>
            </CommandGrip>
            <Icon w={10} h={8} color="#888"><path d="M0.5 0.5H9.5V7.5H0.5ZM0.5 2H9.5M2 3.5L3.5 4.5L2 6M5 6H7"/></Icon>
            <Caret color="#888"/>
            <input aria-label="Command" placeholder="Type a command"/>
            <Icon w={4} h={3} color="none"><path d="M0 3L2 0L4 3Z" fill="#777"/></Icon>
          </CommandLine>
        </Canvas>

        <StatusBar>
          <LayoutTabs>
            {[['Model', 32], ['Layout1', 34]].map(([name, w]) => (
              <LayoutTab key={name} $w={w} $active={name === layout} onClick={() => setLayout(name)}>{name}</LayoutTab>
            ))}
            <LayoutTab $w={14} aria-label="Add layout">+</LayoutTab>
          </LayoutTabs>
          <StatusTools>
            <StatusTool $w={28}>MODEL</StatusTool>
            <StatusTool $w={14} aria-label="Grid"><Icon w={9} color="#c5cad2"><path d="M2 0V9M4.5 0V9M7 0V9M0 2H9M0 4.5H9M0 7H9" strokeWidth="0.8"/></Icon></StatusTool>
            <StatusTool $on aria-label="Snap"><Icon w={9}><path d="M0 1H9M0 4.5H9M0 8H9" strokeDasharray="1 1"/></Icon></StatusTool>
            <StatusTool $w={10} aria-label="Snap options"><Caret/></StatusTool>
            <StatusTool $on aria-label="Ortho"><Icon w={9}><path d="M1 0V8.5H9M1 5H4V8"/></Icon></StatusTool>
            <StatusTool $w={14} aria-label="Polar"><Icon w={9}><path d="M8 2A4 4 0 1 0 8.5 6M4.5 4.5H9M4.5 4.5L8 1" strokeWidth="0.9"/></Icon></StatusTool>
            <StatusTool $w={10} aria-label="Polar options"><Caret/></StatusTool>
            <StatusTool aria-label="Isometric"><Icon w={9}><path d="M1 1L8 8" stroke="#d66"/><path d="M5 0V9" stroke="#7c8"/></Icon></StatusTool>
            <StatusTool $w={10} aria-label="Isometric options"><Caret/></StatusTool>
            <StatusTool $on aria-label="Tracking"><Icon w={9}><path d="M8 0L1 7H9"/></Icon></StatusTool>
            <StatusTool $on aria-label="Object snap"><Icon w={9}><path d="M2 2H8V8H2ZM0 1H3M1 0V3" strokeWidth="0.9"/></Icon></StatusTool>
            <StatusTool $w={10} aria-label="Snap list"><Caret/></StatusTool>
            <StatusTool $on aria-label="Annotation visibility"><Icon w={11} box="0 0 12 12">{personShape}<circle cx="9" cy="3" r="1.5"/></Icon></StatusTool>
            <StatusTool aria-label="Auto scale"><Icon w={11} box="0 0 12 12">{personShape}<path d="M8 1L10 5" stroke="#ddd"/></Icon></StatusTool>
            <StatusTool aria-label="Annotation scale"><Icon w={10} box="0 0 12 12">{personShape}</Icon></StatusTool>
            <StatusTool $w={19}>1:1 <Caret/></StatusTool>
            <StatusTool $w={14} aria-label="Workspace"><Icon><circle cx="5" cy="5" r="2.5" strokeWidth="2"/><path d="M5 0V2M5 8V10M0 5H2M8 5H10M1.5 1.5L3 3M7 7L8.5 8.5M8.5 1.5L7 3M3 7L1.5 8.5" strokeWidth="1.5"/></Icon></StatusTool>
            <StatusTool $w={10} aria-label="Workspace list"><Caret/></StatusTool>
            <StatusTool aria-label="Monitor"><Icon w={9}><path d="M4.5 0V9M0 4.5H9"/></Icon></StatusTool>
            <StatusTool $w={15} aria-label="Isolate"><Icon><path d="M0.5 0.5H4V4H0.5ZM3 9.5L5 6L7 9.5Z" strokeWidth="0.9"/><circle cx="8" cy="4" r="1.5"/></Icon></StatusTool>
            <StatusTool aria-label="Hardware"><Icon color="none"><path d="M0 1H6V5H0Z" fill="#4e9bdc"/><path d="M1 5H8V9H1Z" fill="#e2b34e"/><path d="M4 7L6 9L10 4" stroke="#5cc95e" strokeWidth="1.5"/></Icon></StatusTool>
            <StatusTool $w={14} aria-label="Graphics"><Icon color="none"><path d="M0 0H9V7H0Z" fill="#e4e7ea"/><path d="M2 5L4 2L6 5" stroke="#555"/><path d="M5 6L9 10" stroke="#d87b6a" strokeWidth="2"/></Icon></StatusTool>
            <StatusTool $w={16} aria-label="Clean screen"><Icon w={10} h={8}><path d="M0.5 0.5H9.5V7.5H0.5ZM6 2H8V4M4 6H2V4"/></Icon></StatusTool>
            <StatusTool $w={14} aria-label="Customization"><Icon w={10} h={8}><path d="M0 0.5H10M0 4H10M0 7.5H10"/></Icon></StatusTool>
          </StatusTools>
        </StatusBar>
      </AppWindow>

      <Taskbar>
        <TaskButton $w={29} aria-label="Start">
          <Icon w={10} color="none"><path d="M0 1.5L4 1V4.7H0ZM4.7 0.9L10 0V4.7H4.7ZM0 5.4H4V9L0 8.5ZM4.7 5.4H10V10L4.7 9.2Z" fill="#111"/></Icon>
        </TaskButton>
        <TaskSearch>
          <Icon color="#333"><circle cx="6" cy="4" r="3.5"/><path d="M3.5 6.5L0.5 9.5"/></Icon>
          <input aria-label="Search Windows" placeholder="Type here to search"/>
          <Icon w={38} h={17} color="none">
            <path d="M2 15L7 9" stroke="#e0488a" strokeWidth="2"/>
            <ellipse cx="11" cy="5.5" rx="5" ry="3.6" transform="rotate(-45 11 5.5)" fill="#f3c3d8" stroke="#d8336f" strokeWidth="1.2"/>
            <circle cx="23" cy="7.5" r="6.5" fill="#8ccf4a"/>
            <path d="M18 4Q24 6 22 14M24 1Q23 6 29 9" stroke="#e8f7d0"/>
            <path d="M30 9L37 12M29 12L34 15" stroke="#8a72d8"/>
            <path d="M35 0V5M32.5 2.5H37.5" stroke="#d05fd8" strokeWidth="1.5"/>
            <circle cx="2" cy="5" r="1.2" fill="#f0a63a"/><circle cx="12" cy="15" r="1" fill="#4bc3e6"/>
          </Icon>
        </TaskSearch>
        <TaskButton $w={29} aria-label="Cortana"><Icon color="#222"><circle cx="5" cy="5" r="4" strokeWidth="1.5"/></Icon></TaskButton>
        <TaskButton $w={27} $mr={4} aria-label="Task view"><Icon color="#222"><path d="M1 0V1.5H7V0M0.5 3.5H7V7H0.5ZM1 10V8.5H7V10M9 0V10M8 4H10"/></Icon></TaskButton>
        <TaskButton $open $w={62} $mr={5}>
          <Icon w={14} color="none">
            <circle cx="7" cy="7" r="7" fill="#1c86d1"/>
            <path d="M0 6Q1 0 7 0Q14 0 14 6Q14 9 10 9Q8 9 9 7Q9 4 6 4Q2 4 0 6Z" fill="#45c4a0"/>
            <path d="M5 7Q4 12 11 12Q7 15 3 12Q1 8 5 7Z" fill="#0d5aa6"/>
            <path d="M6 6Q9 5 8 8Q8 10 11 10.5Q5 11 6 6Z" fill="#dff2f7"/>
          </Icon>
          Seller Dash...
        </TaskButton>
        <TaskButton $open $w={62} $mr={2}>
          <Icon w={14} h={13} color="none"><path d="M3 1H8L11 3V12L3 13Z" fill="#f5cf66"/><path d="M3 3L7 2V12L3 13Z" fill="#ffe08a"/></Icon>
          DIDNT GOT
        </TaskButton>
        <TaskButton $w={29} aria-label="This PC">
          <Icon w={12} color="none"><path d="M1 1L11 3V9L1 8Z" fill="#56b7ea"/><path d="M3 9L11 10L10 11L2 10Z" fill="#2c7fb8"/></Icon>
        </TaskButton>
        <TaskButton $open $w={62} $mr={2}>
          <svg width="13" height="13" viewBox="0 0 12 12">
            <path d="M0 0H12V12H0Z" fill="#14206e"/>
            <text x="6" y="9" fontSize="8" fontWeight="600" textAnchor="middle" fill="#9fd0ff">Ps</text>
          </svg>
          Untitled-1 ...
        </TaskButton>
        <TaskButton $open $front $w={65}>
          <Icon w={16} h={14} color="none"><path d="M3 12L7 1H10L14 12H11L8.5 5L6 12Z" fill="#c9242c"/><path d="M5 9L11.5 8V10H5Z" fill="#8e1118"/></Icon>
          AutoCAD 2...
        </TaskButton>
        <Tray>
          <Weather>
            <Icon w={12} color="none"><circle cx="8" cy="4" r="4" fill="#f5a623"/><path d="M0 8Q0 4 4 4Q8 4 8 8Q6 9 4 9Z" fill="#d7ecfb"/><path d="M2 8V11M6 8V11M4 8V12" stroke="#3b93dd" strokeWidth="1.5"/></Icon>
            29°C
          </Weather>
          <Icon w={9} color="#222"><path d="M1 6L4.5 3L8 6"/></Icon>
          <Icon w={9} color="#222"><path d="M1 3.5H6V8H1ZM3 1H8M6 4.5H8.5V7"/></Icon>
          <Icon w={10} color="#222"><path d="M1 3H9V7H1Z" fill="#222"/><path d="M2 2L5 6" stroke="#fff" strokeWidth="0.7"/></Icon>
          <Icon w={9} color="#222"><path d="M1 8L8 1M2.5 8Q4 5 8 4M5 8Q6 7 8 6.5M7.5 8H9" strokeWidth="0.9"/></Icon>
          <Icon w={10} color="#222"><path d="M0.5 3.5H2L4 1.5V8.5L2 6.5H0.5ZM6 3.5Q7 5 6 6.5M7.5 2Q9.5 5 7.5 8" strokeWidth="0.9"/></Icon>
          <TrayText>ENG<br/>US</TrayText>
          <TrayText>13:19<br/>27-06-2022</TrayText>
          <ToolButton $w={16} $h={16} aria-label="Notifications">
            <svg width="15" height="14" viewBox="0 0 15 14">
              <path d="M0 0H10V8H5L2 11V8H0Z" fill="#222"/>
              <path d="M2 2.5H8M2 5H8" stroke="#ddd"/>
              <circle cx="10" cy="9" r="4.5" fill="#d9d9d9" stroke="#444"/>
              <text x="10" y="11.5" fontSize="7" textAnchor="middle" fill="#222">6</text>
            </svg>
          </ToolButton>
        </Tray>
      </Taskbar>
    </Screen>
  );
};

export default App;
